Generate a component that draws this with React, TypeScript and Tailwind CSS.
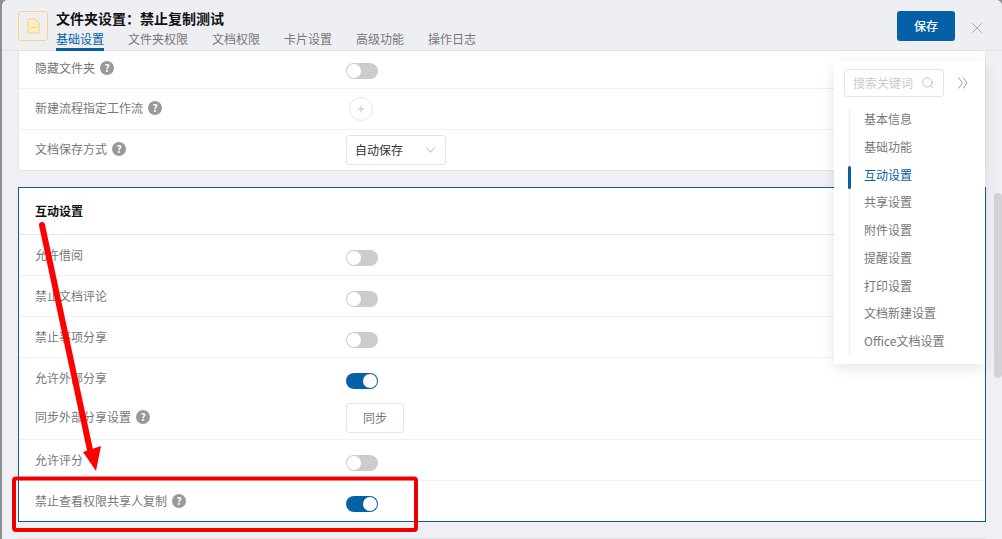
import { Plus, Search, X } from "lucide-react";

const FONT = "font-['Noto_Sans_CJK_SC','Liberation_Sans',sans-serif]";

const TABS = ["基础设置", "文件夹权限", "文档权限", "卡片设置", "高级功能", "操作日志"];
const NAV = [
  "基本信息",
  "基础功能",
  "互动设置",
  "共享设置",
  "附件设置",
  "提醒设置",
  "打印设置",
  "文档新建设置",
  "Office文档设置",
];

function Help() {
  return (
    <span className="ml-[5px] flex h-[14px] w-[14px] items-center justify-center rounded-full bg-[#999] text-[10px] font-bold leading-none text-white">
      ?
    </span>
  );
}

function Toggle({ on = false, className = "mt-[6px]" }: { on?: boolean; className?: string }) {
  return (
    <span
      className={`flex h-4 w-8 items-center rounded-full p-[1px] ${className} ${
        on ? "justify-end bg-[#0560a8]" : "justify-start bg-[#cccccc]"
      }`}
    >
      <span className="h-[14px] w-[14px] rounded-full bg-white" />
    </span>
  );
}

function Row({
  label,
  help,
  last,
  height = "h-[41px]",
  lift = "",
  children,
}: {
  label: string;
  help?: boolean;
  last?: boolean;
  height?: string;
  lift?: string;
  children: React.ReactNode;
}) {
  return (
    <div className={`flex items-center border-b pl-4 ${height} ${last ? "border-transparent" : "border-[#f0f0f0]"}`}>
      <div className={`flex w-[311px] items-center text-xs text-[#777] ${lift}`}>
        <span>{label}</span>
        {help && <Help />}
      </div>
      {children}
    </div>
  );
}

export default function App() {
  return (
    <div className={`${FONT} relative h-[539px] w-[1002px] overflow-hidden bg-[#8f8f8f] pl-[2px]`}>
      <div className="flex h-full flex-col overflow-hidden rounded-t-md bg-[#eff0f4]">
        {/* Header */}
        <div className="flex h-[51px] shrink-0 items-start border-b border-[#dfe0e4] bg-[#eeeff3] pl-4">
          <div className="mt-[11px] flex h-[30px] w-[30px] items-center justify-center rounded-[3px] border border-[#fdd57a]">
            <svg width="13" height="16" viewBox="0 0 13 16" fill="none">
              <path d="M1 1h7l4 4v10H1z" fill="#ffedc4" stroke="#fbd06d" />
              <path d="M3 9.5h7" stroke="#fbd06d" />
            </svg>
          </div>
          <div className="ml-2 flex-1">
            <div className="mt-[9px] h-[18px] text-sm font-bold leading-[18px] text-[#111]">
              文件夹设置：禁止复制测试
            </div>
            <div className="mt-[1px] flex gap-6">
              {TABS.map((t, i) => (
                <span
                  key={t}
                  className={`h-[23px] text-xs leading-[22px] ${
                    i === 0 ? "border-b-[3px] border-[#0560a8] text-[#0560a8]" : "text-[#777]"
                  }`}
                >
                  {t}
                </span>
              ))}
            </div>
          </div>
          <button className="mt-[11px] h-[30px] w-[58px] rounded-[3px] bg-[#0560a8] text-xs font-medium text-white">
            保存
          </button>
          <X className="ml-[13px] mr-4 mt-[19px] text-[#999]" size={18} strokeWidth={1.1} />
        </div>

        {/* Body */}
        <div className="flex min-h-0 flex-1">
          <div className="w-[984px] shrink-0 pl-4">
            <div className="h-[120px] border-x border-b border-[#e4e5e9] bg-white">
              <Row label="隐藏文件夹" help height="h-[38px]" lift="mb-[3px]">
                <Toggle className="mt-[3px]" />
              </Row>
              <Row label="新建流程指定工作流" help lift="mb-[2px]">
                <span className="ml-[3px] flex h-6 w-6 items-center justify-center rounded-full border border-[#e8e8e8] text-[#bbb]">
                  <Plus size={10} />
                </span>
              </Row>
              <Row label="文档保存方式" help last lift="mb-[2px]">
                <div className="flex h-[30px] w-[100px] items-center justify-between rounded-[3px] border border-[#e4e4e4] pl-2 pr-[10px] text-xs text-[#333]">
                  自动保存
                  <svg width="9" height="6" viewBox="0 0 9 6" fill="none">
                    <path d="M0.3 0.5 L4.5 5.3 L8.7 0.5" stroke="#b0b0b0" />
                  </svg>
                </div>
              </Row>
            </div>

            <div className="mt-4 h-[335px] border border-[#0a5a9c] bg-white">
              <div className="flex h-[47px] items-center border-b border-[#e4e4e4] pl-4 text-xs font-bold text-[#111]">
                互动设置
              </div>
              <Row label="允许借阅">
                <Toggle />
              </Row>
              <Row label="禁止文档评论">
                <Toggle />
              </Row>
              <Row label="禁止事项分享">
                <Toggle />
              </Row>
              <Row label="允许外部分享" last>
                <Toggle on />
              </Row>
              <Row label="同步外部分享设置" help lift="mb-[4px]">
                <div className="mb-[2px] flex h-[30px] w-[58px] items-center justify-center rounded-[3px] border border-[#e4e4e4] text-xs text-[#777]">
                  同步
                </div>
              </Row>
              <Row label="允许评分">
                <Toggle />
              </Row>
              <Row label="禁止查看权限共享人复制" help last>
                <Toggle on />
              </Row>
            </div>
            <div className="mt-4 h-4 border-t border-[#e4e5e9] bg-white" />
          </div>

          {/* Scrollbar */}
          <div className="ml-2 w-2">
            <div className="mt-[142px] h-[185px] rounded-full bg-[#d2d3d8]" />
          </div>
        </div>
      </div>

      {/* Floating anchor nav */}
      <div className="absolute left-[834px] top-[61px] h-[303px] w-[151px] rounded-[3px] bg-white pl-[10px] pt-2 shadow-[0_4px_14px_rgba(0,0,0,0.1)]">
        <div className="flex items-center">
          <div className="flex h-7 w-[100px] items-center justify-between rounded-[3px] border border-[#e4e4e4] pl-2 pr-2 text-xs text-[#ccc]">
            搜索关键词
            <Search size={14} strokeWidth={1.2} className="text-[#aaa]" />
          </div>
          <svg className="ml-[14px]" width="10" height="12" viewBox="0 0 10 12" fill="none">
            <path d="M0.5 0.5 L4.5 6 L0.5 11.5 M5 0.5 L9 6 L5 11.5" stroke="#a0a0a0" />
          </svg>
        </div>
        <div className="relative ml-[5px] mt-[10px] h-[249px] border-l border-[#eeeeee] pl-[14px]">
          {NAV.map((n, i) => (
            <div
              key={n}
              className={`relative h-[27.75px] text-xs leading-[23px] ${
                i === 2 ? "text-[#0560a8]" : "text-[#777]"
              }`}
            >
              {i === 2 && (
                <span className="absolute left-[-16px] top-[3px] h-[23px] w-[3px] rounded-full bg-[#0560a8]" />
              )}
              {n}
            </div>
          ))}
        </div>
      </div>

      {/* Red annotation */}
      <svg className="pointer-events-none absolute left-0 top-0" width="1002" height="539" viewBox="0 0 1002 539" fill="none">
        <path d="M42 225 L90 450" stroke="#ff0000" strokeWidth="6" strokeLinecap="round" />
        <path d="M83 452 L101 446 L96 471 Z" fill="#ff0000" />
        <rect x="14" y="478.5" width="402" height="51.5" rx="2" stroke="#f00000" strokeWidth="4" />
      </svg>
    </div>
  );
}
